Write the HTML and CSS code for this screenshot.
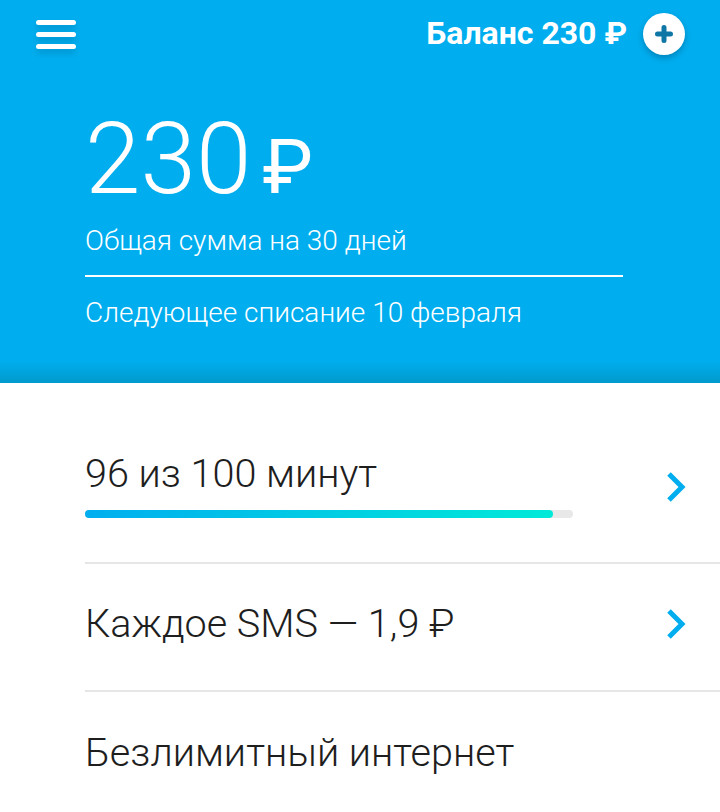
FILE: index.html
```html
<!DOCTYPE html>
<html lang="ru">
<head>
<meta charset="utf-8">
<title>Баланс</title>
<link rel="stylesheet" href="styles.css">
</head>
<body>
<header class="hero">
  <div class="topbar">
    <div class="burger"><span></span><span></span><span></span></div>
    <div class="balance">
      <span class="balance-text">Баланс 230 ₽</span>
      <span class="plus">
        <svg width="18" height="18" viewBox="0 0 18 18"><path d="M9 2.5v13M2.5 9h13" stroke="#0f77a6" stroke-width="5" stroke-linecap="round" fill="none"/></svg>
      </span>
    </div>
  </div>
  <div class="summary">
    <div class="amount"><span class="num">230</span><span class="cur">₽</span></div>
    <div class="caption">Общая сумма на 30 дней</div>
    <div class="rule"></div>
    <div class="caption next">Следующее списание 10 февраля</div>
  </div>
</header>
<main class="list">
  <div class="row first">
    <div class="row-body">
      <div class="row-title">96 из 100 минут</div>
      <div class="bar"><div class="bar-fill" style="width:96%"></div></div>
    </div>
    <svg class="chev" width="22" height="32" viewBox="0 0 22 32"><path d="M4 3l13 13L4 29" stroke="#00aeef" stroke-width="5" fill="none"/></svg>
  </div>
  <div class="row">
    <div class="row-body">
      <div class="row-title">Каждое SMS — 1,9 ₽</div>
    </div>
    <svg class="chev" width="22" height="32" viewBox="0 0 22 32"><path d="M4 3l13 13L4 29" stroke="#00aeef" stroke-width="5" fill="none"/></svg>
  </div>
  <div class="row last">
    <div class="row-body">
      <div class="row-title">Безлимитный интернет</div>
    </div>
  </div>
</main>
</body>
</html>
```
FILE: styles.css
```css
html, body {
  margin: 0;
  padding: 0;
  background: #fff;
  font-family: Roboto, "Noto Sans", sans-serif;
}
.hero {
  height: 383px;
  box-sizing: border-box;
  background: linear-gradient(to bottom, #00aeef 0, #00aeef 360px, #009acc 383px);
  color: #fff;
}
.topbar {
  height: 68px;
  display: flex;
  align-items: center;
  justify-content: space-between;
  padding: 0 36px 0 36px;
}
.burger {
  display: flex;
  flex-direction: column;
  gap: 7px;
  filter: drop-shadow(0 4px 3px rgba(0, 60, 100, 0.25));
}
.burger span {
  display: block;
  width: 40px;
  height: 5px;
  border-radius: 3px;
  background: #fff;
}
.balance {
  display: flex;
  align-items: center;
  gap: 16px;
}
.balance-text {
  font-size: 32px;
  font-weight: 700;
  line-height: 36px;
  margin-top: -2px;
}
.plus {
  width: 42px;
  height: 42px;
  border-radius: 50%;
  background: #fff;
  display: flex;
  align-items: center;
  justify-content: center;
  box-shadow: 0 3px 6px rgba(0, 50, 90, 0.35);
  margin-right: -1px;
}
.summary {
  padding: 41px 0 0 85px;
}
.amount {
  display: flex;
  align-items: baseline;
  line-height: 100px;
  height: 100px;
}
.num {
  font-size: 100px;
  font-weight: 300;
}
.cur {
  font-size: 76px;
  font-weight: 400;
  margin-left: 11px;
}
.caption {
  font-size: 28px;
  font-weight: 300;
  line-height: 32px;
  margin-top: 16px;
}
.rule {
  width: 538px;
  height: 2px;
  background: #fff;
  margin-top: 18px;
}
.caption.next {
  margin-top: 20px;
}
.list {
  padding-left: 85px;
}
.row {
  display: flex;
  align-items: center;
  justify-content: space-between;
  height: 128px;
  border-bottom: 2px solid #e6e6e6;
  box-sizing: border-box;
  padding-right: 33px;
  padding-bottom: 6px;
  color: #1e1e1e;
}
.row.first {
  height: 181px;
  padding-top: 24px;
  padding-bottom: 0;
}
.row.first .chev {
  margin-top: 4px;
}
.row.last {
  border-bottom: none;
}
.row-body {
  display: flex;
  flex-direction: column;
}
.row-title {
  font-size: 39.6px;
  font-weight: 300;
  line-height: 44px;
}
.bar {
  width: 488px;
  height: 8px;
  border-radius: 4px;
  background: #e8e8e8;
  margin-top: 14px;
}
.bar-fill {
  height: 100%;
  border-radius: 4px;
  background: linear-gradient(to right, #00aeef, #00ead8);
}
.chev {
  display: block;
}
```
